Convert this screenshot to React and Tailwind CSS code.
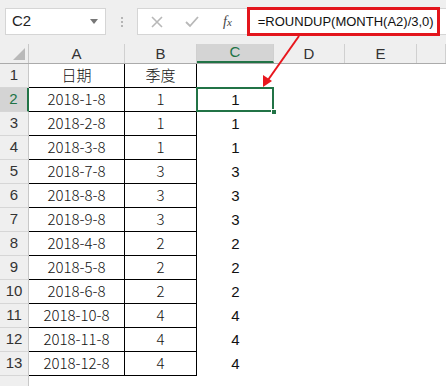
import React from 'react';

const rows = [
  ['2018-1-8', '1', '1'],
  ['2018-2-8', '1', '1'],
  ['2018-3-8', '1', '1'],
  ['2018-7-8', '3', '3'],
  ['2018-8-8', '3', '3'],
  ['2018-9-8', '3', '3'],
  ['2018-4-8', '2', '2'],
  ['2018-5-8', '2', '2'],
  ['2018-6-8', '2', '2'],
  ['2018-10-8', '4', '4'],
  ['2018-11-8', '4', '4'],
  ['2018-12-8', '4', '4'],
];

const cols = ['A', 'B', 'C', 'D', 'E', ''];
const widths = ['w-[96px]', 'w-[72px]', 'w-[77px]', 'w-[71px]', 'w-[72px]', 'flex-1'];

const cjk = { fontFamily: '"Noto Sans CJK SC", sans-serif' };

function RowHead({ n, active }) {
  return (
    <div
      className={`w-[29px] shrink-0 h-full flex items-end justify-center pb-[1px] text-[15px] border-b border-[#d6d6d6] ${
        active ? 'bg-[#d4d4d4] text-[#217346] border-r-2 border-r-[#217346]' : 'bg-[#efefef] text-[#333] border-r border-r-[#c8c8c8]'
      }`}
    >
      {n}
    </div>
  );
}

function DataCell({ w, children }) {
  return (
    <div className={`${w} shrink-0 flex items-center justify-center border-r border-b border-black text-[15px] font-light text-[#111]`} style={cjk}>
      {children}
    </div>
  );
}

export default function App() {
  return (
    <div className="relative w-[446px] h-[386px] overflow-hidden bg-white" style={{ fontFamily: '"Liberation Sans", Arial, sans-serif' }}>
      {/* formula bar */}
      <div className="h-[44px] bg-[#efefef] flex items-start pt-[8px]">
        <div className="ml-[5px] w-[101px] h-[27px] bg-white border border-[#d5d5d5] flex items-center pl-[6px] pr-[7px] text-[15px] text-[#222]">
          <span className="flex-1">C2</span>
          <span className="w-0 h-0 border-l-[4px] border-r-[4px] border-t-[5px] border-l-transparent border-r-transparent border-t-[#777]" />
        </div>
        <div className="w-[31px] h-[27px] flex flex-col items-center justify-center gap-[2px]">
          <span className="w-[2px] h-[2px] bg-[#b5b5b5]" />
          <span className="w-[2px] h-[2px] bg-[#b5b5b5]" />
          <span className="w-[2px] h-[2px] bg-[#b5b5b5]" />
        </div>
        <div className="flex-1 h-[27px] bg-white border border-[#d5d5d5] border-r-0 flex items-center">
          <svg width="14" height="14" viewBox="0 0 14 14" className="ml-[12px]">
            <path d="M2 2 L12 12 M12 2 L2 12" stroke="#b8b8b8" strokeWidth="1.6" fill="none" />
          </svg>
          <svg width="14" height="12" viewBox="0 0 14 12" className="ml-[21px]">
            <path d="M1 6 L5 10 L13 1" stroke="#b8b8b8" strokeWidth="1.8" fill="none" />
          </svg>
          <span className="ml-[24px] text-[14px] italic text-[#444]" style={{ fontFamily: '"Liberation Serif", serif' }}>
            f<span className="text-[11px]">x</span>
          </span>
          <div className="ml-[15px] w-[193px] h-[29px] -my-[1px] border-[3px] border-[#e3151c] flex items-center pl-[8px] text-[13px] text-[#111] whitespace-nowrap">
            =ROUNDUP(MONTH(A2)/3,0)
          </div>
        </div>
      </div>

      {/* column headers */}
      <div className="flex h-[20px] bg-[#efefef] border-b border-[#ababab]">
        <div className="w-[29px] shrink-0 border-r border-[#c8c8c8] relative">
          <svg width="12" height="12" viewBox="0 0 12 12" className="absolute right-[3px] bottom-[3px]">
            <path d="M12 0 L12 12 L0 12 Z" fill="#b9b9b9" />
          </svg>
        </div>
        {cols.map((c, i) => (
          <div
            key={i}
            className={`${widths[i]} shrink-0 h-full flex items-end justify-center text-[15px] leading-[18px] border-r border-[#d0d0d0] ${
              c === 'C' ? 'bg-[#d4d4d4] text-[#217346] border-b-2 border-b-[#217346]' : 'text-[#333]'
            }`}
          >
            {c}
          </div>
        ))}
      </div>

      {/* body */}
      <div className="flex h-[24px]">
        <RowHead n={1} />
        <DataCell w="w-[96px]">日期</DataCell>
        <DataCell w="w-[72px]">季度</DataCell>
        <div className="flex-1" />
      </div>
      {rows.map((r, i) => (
        <div key={i} className="flex h-[24px]">
          <RowHead n={i + 2} active={i === 0} />
          <DataCell w="w-[96px]">{r[0]}</DataCell>
          <DataCell w="w-[72px]">{r[1]}</DataCell>
          <div className="w-[77px] shrink-0 relative flex items-center justify-center text-[15px] text-[#111]">
            {r[2]}
            {i === 0 && (
              <>
                <span className="absolute -left-[1px] -top-[1px] right-0 bottom-0 border-2 border-[#217346]" />
                <span className="absolute -right-[3px] -bottom-[3px] w-[6px] h-[6px] bg-[#217346] border border-white" />
              </>
            )}
          </div>
          <div className="flex-1" />
        </div>
      ))}
      <div className="flex h-[10px]">
        <div className="w-[29px] shrink-0 h-full bg-[#efefef] border-r border-[#c8c8c8]" />
      </div>

      {/* arrow */}
      <svg className="absolute left-0 top-0 pointer-events-none" width="446" height="386">
        <line x1="299" y1="36" x2="268" y2="80" stroke="#e8161d" strokeWidth="2" />
        <path d="M263 87 L263 75 L272 81 Z" fill="#e8161d" />
      </svg>
    </div>
  );
}
